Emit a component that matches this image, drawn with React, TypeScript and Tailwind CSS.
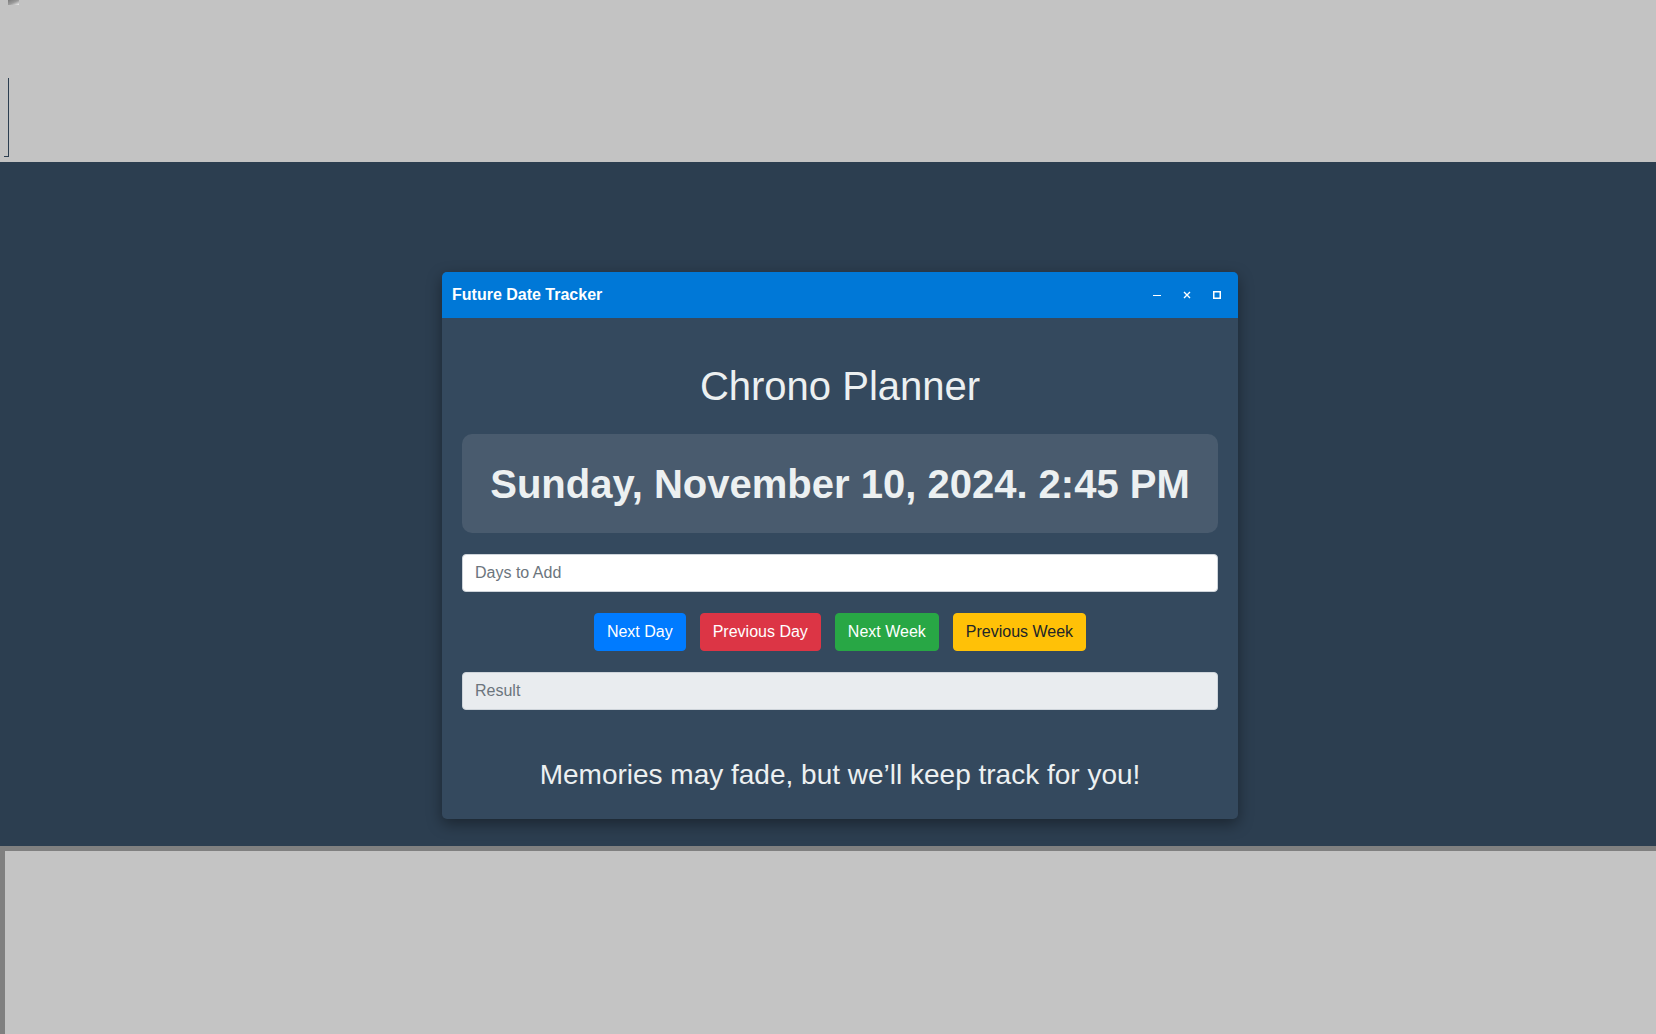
import React from "react";

const font = { fontFamily: '"Liberation Sans", Arial, sans-serif' };

function TitleButtons() {
  return (
    <div className="flex items-center gap-[22px] pr-[17px]">
      <svg width="8" height="8" viewBox="0 0 8 8" className="block">
        <line x1="0" y1="4.5" x2="8" y2="4.5" stroke="white" strokeWidth="1" />
      </svg>
      <svg width="8" height="8" viewBox="0 0 8 8" className="block">
        <path d="M1 1 L7 7 M7 1 L1 7" stroke="white" strokeWidth="1.4" />
      </svg>
      <svg width="8" height="8" viewBox="0 0 8 8" className="block">
        <rect x="0.75" y="0.75" width="6.5" height="6.5" fill="none" stroke="white" strokeWidth="1.5" />
      </svg>
    </div>
  );
}

export default function App() {
  return (
    <div className="w-[1656px] h-[1034px] overflow-hidden bg-[#c4c4c4]" style={font}>
      {/* top strip with leftover widgets */}
      <div className="h-[162px] bg-[#c3c3c3] pl-[8px]">
        <div className="w-[11px] h-[5px] bg-gradient-to-br from-[#7a7a7a] via-[#9a9a9a] to-[#f0f0f0]" />
        <div className="mt-[73px] flex items-end">
          <div className="w-[4px] h-[1px] bg-[#2c3e50] -ml-[4px]" />
          <div className="w-[1px] h-[79px] bg-[#2c3e50]" />
        </div>
      </div>

      {/* main */}
      <div className="h-[684px] bg-[#2c3e50] pt-[110px]">
        <div className="ml-[442px] w-[796px] rounded-[5px] bg-[#34495e] shadow-[0_5px_15px_rgba(0,0,0,0.4)] overflow-hidden">
          <div className="h-[46px] bg-[#0078d7] flex items-center justify-between pl-[10px]">
            <span className="text-white font-bold text-[16px]">Future Date Tracker</span>
            <TitleButtons />
          </div>

          <div className="px-5 pt-5 pb-[27px] text-[#ecf0f1]">
            <h1 className="mt-6 mb-6 text-center text-[40px] leading-[48px] font-normal">Chrono Planner</h1>

            <div className="rounded-[10px] bg-[#495b6e] pt-[21px] pb-[19px] text-center">
              <h2 className="text-[40px] leading-[59px] font-bold">Sunday, November 10, 2024. 2:45 PM</h2>
            </div>

            <input
              type="number"
              placeholder="Days to Add"
              className="mt-[21px] block w-full h-[38px] rounded border border-[#ced4da] bg-white px-3 text-[16px] text-[#495057] placeholder:text-[#6c757d] outline-none"
              style={font}
            />

            <div className="mt-[21px] flex justify-center gap-[14px]">
              <button className="h-[38px] px-3 rounded border border-[#007bff] bg-[#007bff] text-white text-[16px]">Next Day</button>
              <button className="h-[38px] px-3 rounded border border-[#dc3545] bg-[#dc3545] text-white text-[16px]">Previous Day</button>
              <button className="h-[38px] px-3 rounded border border-[#28a745] bg-[#28a745] text-white text-[16px]">Next Week</button>
              <button className="h-[38px] px-3 rounded border border-[#ffc107] bg-[#ffc107] text-[#212529] text-[16px]">Previous Week</button>
            </div>

            <input
              type="text"
              readOnly
              placeholder="Result"
              className="mt-[21px] block w-full h-[38px] rounded border border-[#ced4da] bg-[#e9ecef] px-3 text-[16px] text-[#495057] placeholder:text-[#6c757d] outline-none"
              style={font}
            />

            <p className="mt-[48px] text-center text-[28px] leading-[34px]">Memories may fade, but we’ll keep track for you!</p>
          </div>
        </div>
      </div>

      {/* bottom panel */}
      <div className="h-[188px] border-t-[5px] border-l-[5px] border-[#808080] bg-[#c4c4c4]" />
    </div>
  );
}
